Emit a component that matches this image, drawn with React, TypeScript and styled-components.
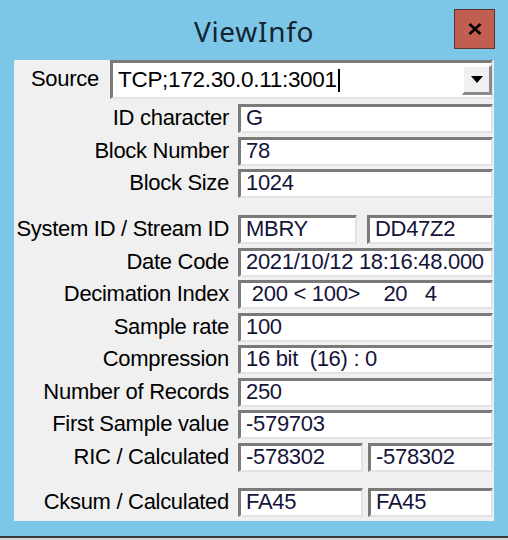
import React from 'react';
import styled, { createGlobalStyle } from 'styled-components';

const Global = createGlobalStyle`
  html, body { margin: 0; padding: 0; background: #d6d6d6; }
  body { width: 508px; height: 540px; overflow: hidden; }
`;

const Frame = styled.div`
  width: 508px;
  height: 536px;
  background: #7cc7e7;
  border-bottom: 2px solid #3a3a3a;
  display: flex;
  flex-direction: column;
`;

const TitleBar = styled.div`
  height: 60px;
  display: grid;
  grid-template-columns: 1fr auto 1fr;
  padding: 0 13px;
  box-sizing: border-box;
`;

const Title = styled.div`
  grid-column: 2;
  align-self: start;
  padding-top: 13px;
  font-family: "Noto Sans", "Open Sans", sans-serif;
  font-size: 28px;
  letter-spacing: 0.7px;
  line-height: 37px;
  color: #142430;
`;

const CloseButton = styled.div`
  grid-column: 3;
  justify-self: end;
  align-self: start;
  margin-top: 9px;
  width: 41px;
  height: 40px;
  box-sizing: border-box;
  background: #c25d52;
  border: 1px solid #5b3631;
  display: flex;
  align-items: center;
  justify-content: center;
`;

const Client = styled.div`
  margin: 0 14px;
  width: 480px;
  height: 461px;
  background: #f0f0f0;
  display: flex;
  flex-direction: column;
  font-family: "Liberation Sans", Arial, sans-serif;
  font-size: 22px;
  letter-spacing: -0.3px;
`;

const SourceRow = styled.div`
  display: flex;
  align-items: center;
  height: 39px;
`;

const SourceLabel = styled.div`
  width: 96px;
  padding-left: 17px;
  box-sizing: border-box;
  color: #000;
  line-height: 20px;
  padding-bottom: 2px;
`;

const sunken = `
  box-sizing: border-box;
  border-style: solid;
  border-width: 3px 2px 2px 3px;
  border-color: #7a7a7a #e3e3e3 #e3e3e3 #7a7a7a;
  background: #ffffff;
`;

const Combo = styled.div`
  ${sunken}
  width: 383px;
  height: 39px;
  display: flex;
  align-items: center;
  padding-left: 5px;
`;

const ComboText = styled.div`
  flex: 1;
  color: #000;
  font-size: 22.5px;
  line-height: 22px;
  display: flex;
  align-items: center;
`;

const Caret = styled.span`
  display: inline-block;
  width: 2px;
  height: 23px;
  background: #000;
  margin-left: 1px;
`;

const DropButton = styled.div`
  width: 30px;
  height: 30px;
  box-sizing: border-box;
  background: #f0f0f0;
  border-style: solid;
  border-width: 2px 3px 3px 2px;
  border-color: #ffffff #8a8a8a #8a8a8a #ffffff;
  display: flex;
  align-items: center;
  justify-content: center;
  margin-right: -1px;
`;

const Group = styled.div<{ $top: number }>`
  display: flex;
  flex-direction: column;
  gap: 3.5px;
  margin-top: ${p => p.$top}px;
`;

const Row = styled.div`
  display: grid;
  grid-template-columns: 215px 255px;
  column-gap: 9px;
  height: 29px;
`;

const Label = styled.div`
  text-align: right;
  color: #000;
  line-height: 20px;
  padding-top: 4px;
  white-space: nowrap;
`;

const Fields = styled.div<{ $first: number; $gap: number }>`
  display: grid;
  grid-template-columns: ${p => p.$first}px 1fr;
  column-gap: ${p => p.$gap}px;
`;

const Field = styled.div`
  ${sunken}
  height: 29px;
  padding-left: 5px;
  padding-top: 1px;
  color: #14143a;
  line-height: 20px;
  white-space: pre;
  overflow: hidden;
`;

const Single = ({ label, value }: { label: string; value: string }) => (
  <Row>
    <Label>{label}</Label>
    <Field>{value}</Field>
  </Row>
);

const Double = ({ label, a, b, first, gap }: { label: string; a: string; b: string; first: number; gap: number }) => (
  <Row>
    <Label>{label}</Label>
    <Fields $first={first} $gap={gap}>
      <Field>{a}</Field>
      <Field>{b}</Field>
    </Fields>
  </Row>
);

export default function App() {
  return (
    <>
      <Global />
      <Frame>
        <TitleBar>
          <Title>ViewInfo</Title>
          <CloseButton>
            <svg width="14" height="12" viewBox="0 0 14 12">
              <path d="M1.5 1 L12.5 11 M12.5 1 L1.5 11" stroke="#000" strokeWidth="2.6" />
            </svg>
          </CloseButton>
        </TitleBar>
        <Client>
          <SourceRow>
            <SourceLabel>Source</SourceLabel>
            <Combo>
              <ComboText>
                TCP;172.30.0.11:3001<Caret />
              </ComboText>
              <DropButton>
                <svg width="12" height="7" viewBox="0 0 12 7">
                  <polygon points="0,0 12,0 6,7" fill="#000" />
                </svg>
              </DropButton>
            </Combo>
          </SourceRow>
          <Group $top={5}>
            <Single label="ID character" value="G" />
            <Single label="Block Number" value="78" />
            <Single label="Block Size" value="1024" />
          </Group>
          <Group $top={17}>
            <Double label="System ID / Stream ID" a="MBRY" b="DD47Z2" first={119} gap={10} />
            <Single label="Date Code" value="2021/10/12 18:16:48.000" />
            <Single label="Decimation Index" value={' 200 < 100>    20   4'} />
            <Single label="Sample rate" value="100" />
            <Single label="Compression" value="16 bit  (16) : 0" />
            <Single label="Number of Records" value="250" />
            <Single label="First Sample value" value="-579703" />
            <Double label="RIC / Calculated" a="-578302" b="-578302" first={125} gap={5} />
          </Group>
          <Group $top={16.5}>
            <Double label="Cksum / Calculated" a="FA45" b="FA45" first={125} gap={5} />
          </Group>
        </Client>
      </Frame>
    </>
  );
}
